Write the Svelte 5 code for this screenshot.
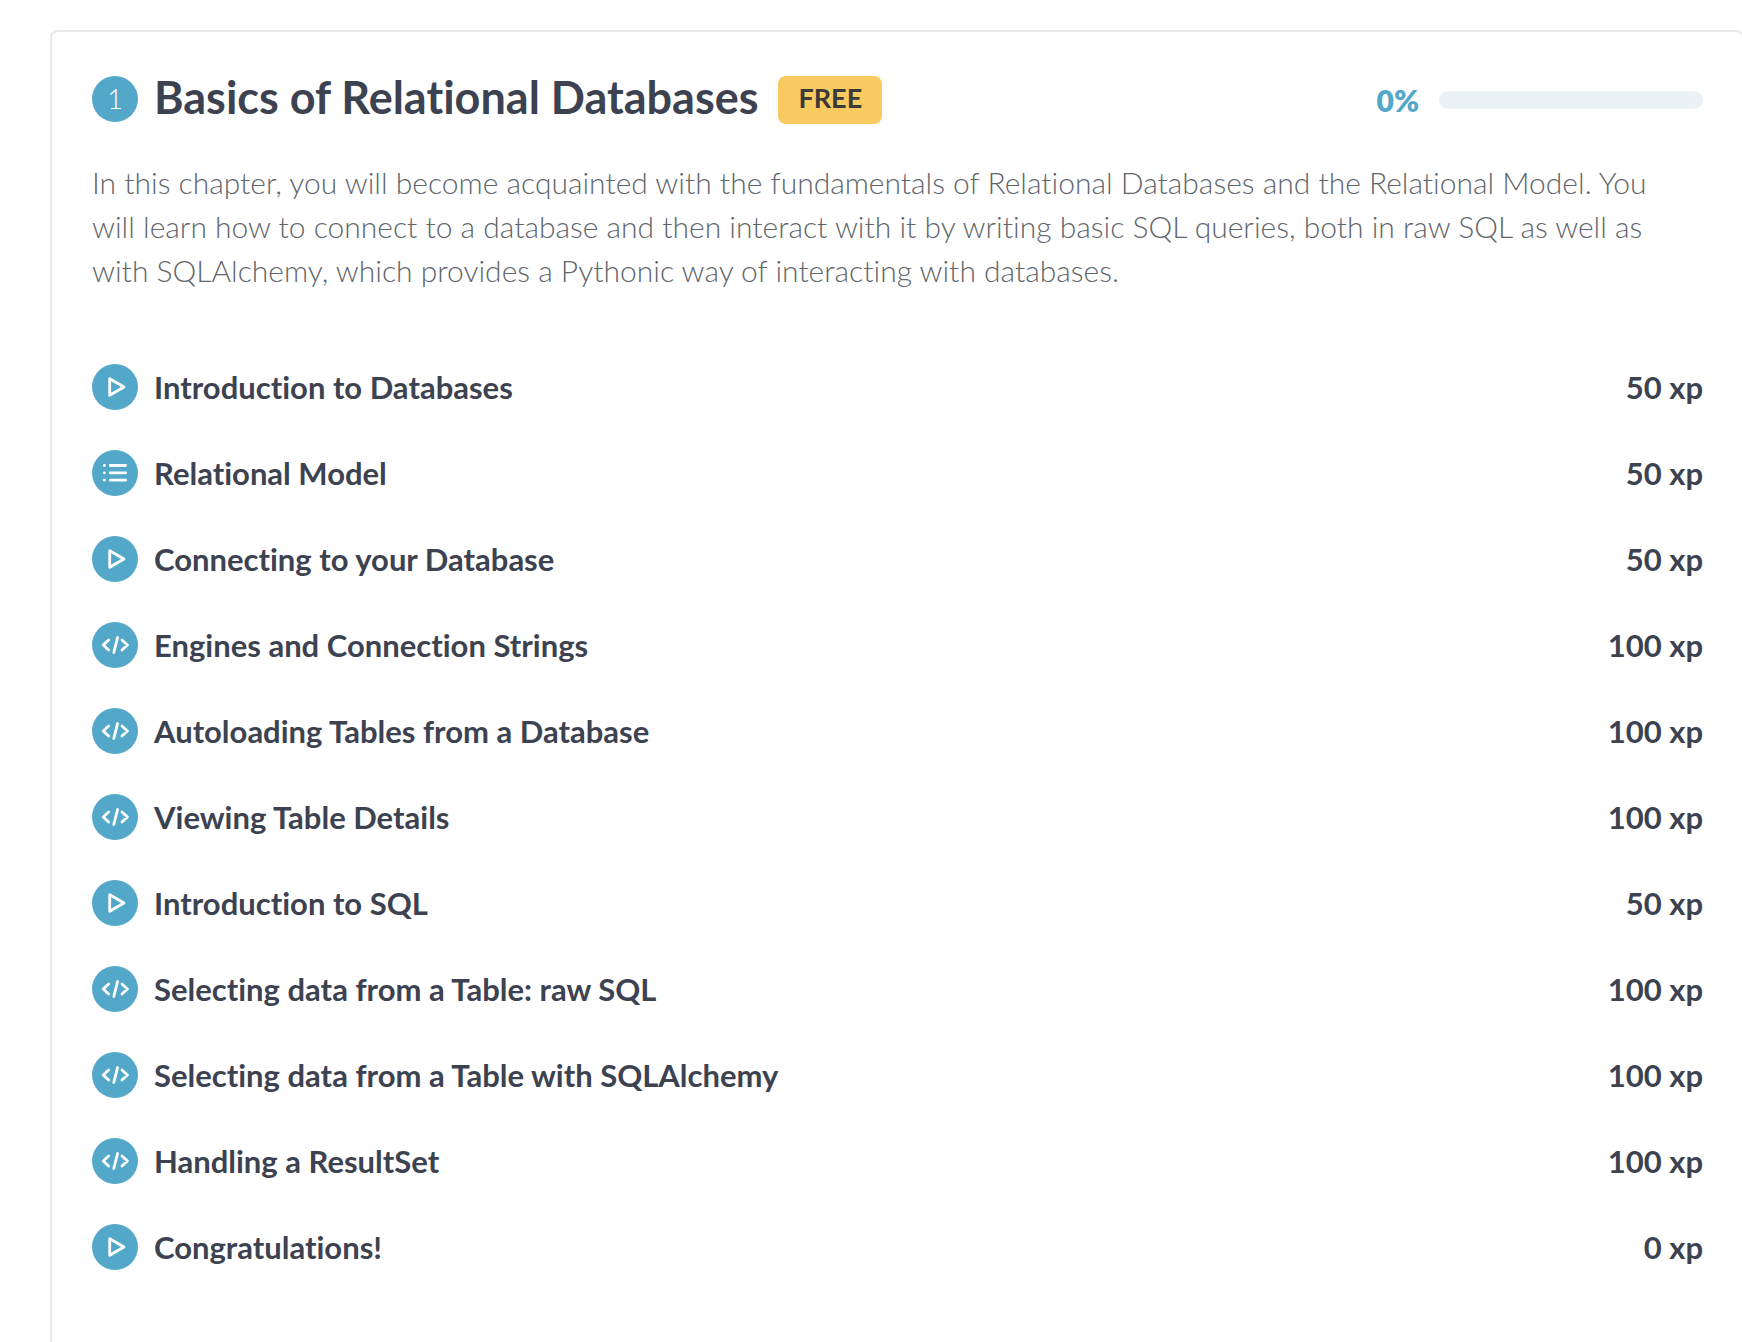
<script>
  const lessons = [
    { kind: 'video', title: 'Introduction to Databases', xp: 50 },
    { kind: 'list', title: 'Relational Model', xp: 50 },
    { kind: 'video', title: 'Connecting to your Database', xp: 50 },
    { kind: 'code', title: 'Engines and Connection Strings', xp: 100 },
    { kind: 'code', title: 'Autoloading Tables from a Database', xp: 100 },
    { kind: 'code', title: 'Viewing Table Details', xp: 100 },
    { kind: 'video', title: 'Introduction to SQL', xp: 50 },
    { kind: 'code', title: 'Selecting data from a Table: raw SQL', xp: 100 },
    { kind: 'code', title: 'Selecting data from a Table with SQLAlchemy', xp: 100 },
    { kind: 'code', title: 'Handling a ResultSet', xp: 100 },
    { kind: 'video', title: 'Congratulations!', xp: 0 }
  ];
  const progress = 0;
</script>

<main class="chapter">
  <header class="head">
    <span class="number">1</span>
    <h1>Basics of Relational Databases</h1>
    <span class="badge">FREE</span>
    <div class="progress">
      <span class="percent">{progress}%</span>
      <div class="track" role="progressbar" aria-label="Chapter progress" aria-valuenow={progress} aria-valuemin="0" aria-valuemax="100">
        <div class="fill" style="width: {progress}%"></div>
      </div>
    </div>
  </header>

  <p class="description">
    In this chapter, you will become acquainted with the fundamentals of Relational Databases and the Relational Model. You will learn how to connect to a database and then interact with it by writing basic SQL queries, both in raw SQL as well as with SQLAlchemy, which provides a Pythonic way of interacting with databases.
  </p>

  <ul class="lessons">
    {#each lessons as lesson}
      <li>
        <a class="lesson" href="#lesson">
          <svg class="icon" viewBox="0 0 46 46" aria-hidden="true">
            <circle cx="23" cy="23" r="23" fill="#53a8c9" />
            <g fill="none" stroke="#fff" stroke-width="2.8" stroke-linejoin="round" stroke-linecap="round">
              {#if lesson.kind === 'video'}
                <path d="M17.700 14.700v16.600l14.300-8.300z" />
              {:else if lesson.kind === 'list'}
                <path d="M18.200 15.500h15.400M18.200 22.800h15.400M18.200 30.200h15.400M12.300 15.500h.1M12.300 22.800h.1M12.300 30.200h.1" />
              {:else}
                <path d="M16.600 18l-5.400 5 5.400 5M30 18l5.400 5-5.400 5M25.600 15.500l-3.800 15" />
              {/if}
            </g>
          </svg>
          <span class="title">{lesson.title}</span>
          <span class="xp">{lesson.xp} xp</span>
        </a>
      </li>
    {/each}
  </ul>
</main>

<style>
  :global(body) {
    background: #fff;
    overflow-x: clip;
  }
  .chapter {
    box-sizing: border-box;
    min-height: calc(100vh - 30px);
    margin: 30px -2px 0 50px;
    padding: 40px 39px 60px 40px;
    border: 2px solid #e6eaea;
    border-bottom: 0;
    border-radius: 8px 8px 0 0;
    font-family: Lato, sans-serif;
    font-variant-ligatures: none;
    color: #3d4251;
  }
  .head {
    display: flex;
    align-items: center;
    min-height: 54px;
  }
  .number {
    display: flex;
    align-items: center;
    justify-content: center;
    width: 46px;
    height: 46px;
    flex: none;
    border-radius: 50%;
    background: #53a8c9;
    color: #fff;
    font-size: 27px;
    line-height: 46px;
    font-weight: 300;
  }
  h1 {
    margin: 0 20px 0 16px;
    font-size: 45px;
    line-height: 50px;
    padding-bottom: 4px;
    font-weight: 700;
  }
  .badge {
    margin-top: 2px;
    padding: 0 20px 4px;
    border-radius: 8px;
    background: #f8ca5f;
    color: #3a3a3a;
    font-size: 27px;
    line-height: 44px;
    font-weight: 700;
  }
  .progress {
    display: flex;
    align-items: center;
    gap: 20px;
    margin: 2px 0 0 auto;
  }
  .percent {
    color: #53a8c9;
    font-size: 30px;
    font-weight: 800;
  }
  .track {
    width: 264px;
    height: 18px;
    border-radius: 9px;
    background: #ebf2f6;
    overflow: hidden;
  }
  .fill {
    height: 100%;
    background: #53a8c9;
  }
  .description {
    margin: 34px 0 0;
    padding-right: 32px;
    font-size: 30px;
    line-height: 44px;
    font-weight: 300;
    color: #5f666c;
  }
  .lessons {
    margin: 52px 0 0;
    padding: 0;
    list-style: none;
  }
  .lesson {
    display: flex;
    align-items: center;
    height: 86px;
    color: inherit;
    text-decoration: none;
    font-size: 31px;
    font-weight: 700;
  }
  .icon {
    width: 46px;
    height: 46px;
    flex: none;
    margin-right: 16px;
  }
  .xp {
    margin-left: auto;
  }
</style>
